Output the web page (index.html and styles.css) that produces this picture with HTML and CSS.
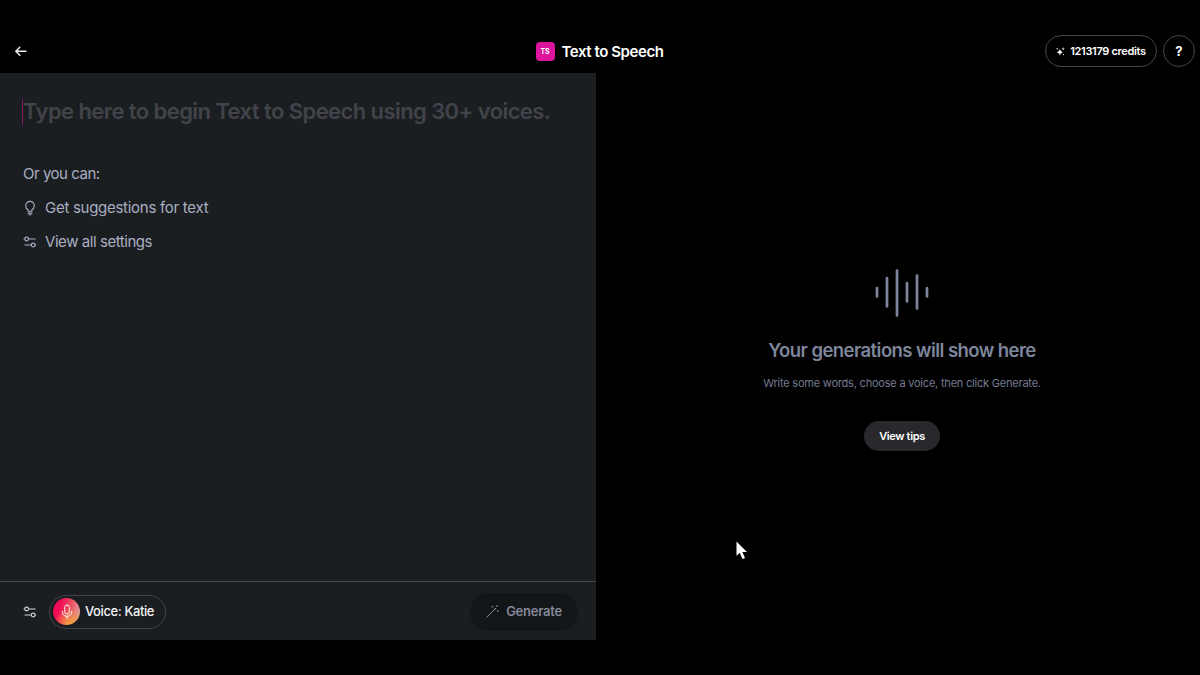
FILE: index.html
```html
<!DOCTYPE html>
<html lang="en">
<head>
<meta charset="utf-8">
<title>Text to Speech</title>
<link rel="stylesheet" href="styles.css">
</head>
<body>
<div class="app">
  <header class="topbar">
    <svg class="back" width="12" height="11" viewBox="0 0 12 11"><path d="M10.9 5.2H1.1M4.8 1.2L.8 5.2L4.8 9.2"/></svg>
    <div class="brand"><span class="logo">TS</span><h1 class="title">Text to Speech</h1></div>
    <div class="actions">
      <button class="credits">
        <svg class="sparkles" width="9" height="9" viewBox="0 0 9 9"><path d="M3.9 2.1Q4.2 4.7 6.9 5.2Q4.2 5.7 3.9 8.6Q3.5 5.7.7 5.2Q3.5 4.7 3.9 2.1ZM7.2 0L7.6 1.4L9 1.8L7.6 2.2L7.2 3.6L6.8 2.2L5.5 1.8L6.8 1.4Z"/><circle cx="1.2" cy="1.8" r=".7"/><circle cx="7.4" cy="7.6" r=".6"/></svg>
        <span class="credits-text">1213179 credits</span>
      </button>
      <button class="help">?</button>
    </div>
  </header>
  <main class="workspace">
    <section class="editor">
      <div class="editor-body">
        <div class="prompt"><span class="prompt-text">Type here to begin Text to Speech using 30+ voices.</span></div>
        <p class="or"><span class="or-text">Or you can:</span></p>
        <a class="option">
          <svg class="line-icon" width="14" height="16" viewBox="0 0 14 16"><path d="M5.1 11.2V9.8Q2.7 8.6 2.7 5.7A4.3 4.3 0 0 1 11.3 5.7Q11.3 8.6 8.9 9.8V11.2ZM5 13.1H9M5.9 14.7H8.1"/></svg>
          <span class="suggest-text">Get suggestions for text</span>
        </a>
        <a class="option">
          <svg class="line-icon" width="14" height="16" viewBox="0 0 14 16"><circle cx="3.6" cy="5" r="1.9"/><circle cx="10.2" cy="11" r="1.9"/><path d="M1 5H1.7M5.5 5H12.2M2 11H8.3M12.1 11H12.8"/></svg>
          <span class="settings-text">View all settings</span>
        </a>
      </div>
      <footer class="toolbar">
        <svg class="line-icon bright" width="14" height="16" viewBox="0 0 14 16"><circle cx="3.6" cy="5" r="1.9"/><circle cx="10.2" cy="11" r="1.9"/><path d="M1 5H1.7M5.5 5H12.2M2 11H8.3M12.1 11H12.8"/></svg>
        <button class="voice">
          <span class="avatar"><svg width="12" height="16" viewBox="0 0 12 16"><rect x="3.7" y="1" width="4.6" height="9" rx="2.3"/><path d="M1.2 7.4Q1.5 12.3 6 12.3Q10.5 12.3 10.8 7.4M6 12.3V14.6"/></svg></span>
          <span class="voice-text">Voice: Katie</span>
        </button>
        <button class="generate">
          <svg class="wand" width="13" height="13" viewBox="0 0 13 13"><path d="M.8 12.2L9.2 3.8"/><path class="dots" d="M6.2 1.7h.3M10.9 1h.3M11.6 5.9h.3M9.2 3.8h.3"/></svg>
          <span class="generate-text">Generate</span>
        </button>
      </footer>
    </section>
    <section class="results">
      <svg class="wave" width="54" height="48" viewBox="0 0 54 48"><path d="M2 19V27.5M12 9V37.5M22 1.5V46.5M32 14V32.5M42 6.5V39.5M52 19V27.5"/></svg>
      <h2 class="empty-title">Your generations will show here</h2>
      <p class="empty-copy">Write some words, choose a voice, then click Generate.</p>
      <button class="tips">View tips</button>
    </section>
  </main>
  <svg class="pointer" width="12" height="19" viewBox="0 0 12 19"><path d="M.5 .5V14.8L3.8 11.7L6.5 18L9 16.9L6.4 10.9H11Z"/></svg>
</div>
</body>
</html>
```
FILE: styles.css
```css
* { box-sizing: border-box; }
body { margin: 0; background: #000; font-family: Inter, sans-serif; overflow: hidden; }
h1, h2, p { margin: 0; }
button { font-family: inherit; padding: 0; border: 0; white-space: nowrap; }
svg { display: block; flex: none; fill: none; stroke: currentColor; stroke-linecap: round; stroke-linejoin: round; }
.app { position: relative; width: 1200px; height: 675px; padding-top: 29px; color: #fff; white-space: nowrap; }

.topbar { display: grid; grid-template-columns: 1fr auto 1fr; align-items: center; height: 44px; padding: 0 5px 0 15px; }
.back { stroke-width: 1.5; color: #eee; }
.brand { display: flex; align-items: center; gap: 7px; padding-right: 11px; }
.logo { display: grid; place-items: center; width: 19px; height: 19px; border-radius: 4px; background: #dc149c; font-size: 7px; font-weight: 700; letter-spacing: -.2px; }
.title { padding-top: 1px; font-size: 15px; font-weight: 600; line-height: 20px; letter-spacing: -.43px; }
.actions { display: flex; justify-content: flex-end; gap: 6px; }
.credits { display: flex; align-items: center; justify-content: center; gap: 5px; width: 112px; height: 32px; border: 1px solid #434347; border-radius: 16px; background: #000; color: #fff; font-size: 11px; font-weight: 600; letter-spacing: -.33px; }
.sparkles { fill: currentColor; stroke: none; }
.help { width: 32px; height: 32px; border: 1px solid #434347; border-radius: 50%; background: #000; color: #fff; font-size: 13px; font-weight: 700; }

.workspace { display: grid; grid-template-columns: 596px 1fr; height: 567px; }
.editor { display: flex; flex-direction: column; background: #1b1e21; }
.editor-body { flex: 1; padding: 26px 22px 0; }
.prompt { height: 26px; border-left: 1px solid #8b1565; color: #42434a; font-size: 22px; font-weight: 600; line-height: 25px; letter-spacing: -.58px; }
.or { margin-top: 37px; padding-left: 1px; color: #a9afc1; font-size: 15px; line-height: 24px; letter-spacing: -.47px; }
.option { display: flex; align-items: center; gap: 8px; height: 24px; margin-top: 10px; padding-left: 1px; color: #a9afc1; font-size: 15px; line-height: 24px; }
.suggest-text { letter-spacing: -.28px; }
.settings-text { letter-spacing: -.44px; }
.line-icon { stroke-width: 1.1; }
.bright { color: #d0d2d8; }
.toolbar { display: flex; align-items: center; height: 59px; padding: 1px 18px 0 23px; border-top: 1px solid #45474c; }
.voice { display: flex; align-items: center; gap: 5px; width: 117px; height: 34px; margin-left: 12px; padding-left: 3px; border: 1px solid #414347; border-radius: 17px; background: transparent; color: #f3f3f5; font-size: 13px; font-weight: 500; letter-spacing: -.4px; }
.avatar { display: grid; place-items: center; width: 27px; height: 27px; border-radius: 50%; background: radial-gradient(circle at 65% 100%, #f6a43a 0, rgba(246,130,60,0) 55%), linear-gradient(100deg, #ef0a55 25%, #f04c60 60%, #d9a5a2 95%); }
.voice-text, .generate-text { padding-bottom: 1px; }
.generate { display: flex; align-items: center; justify-content: center; gap: 7px; width: 108px; height: 38px; margin-left: auto; border-radius: 19px; background: #131619; color: #858797; font-size: 13px; font-weight: 600; letter-spacing: -.25px; }
.wand { stroke-width: 1; }
.dots { stroke-width: 1.5; }

.results { display: flex; flex-direction: column; align-items: center; padding: 196px 0 0 8px; color: #7e869b; }
.wave { stroke-width: 2.7; }
.empty-title { margin-top: 20px; font-size: 18.5px; font-weight: 600; line-height: 26px; letter-spacing: -.56px; }
.empty-copy { margin-top: 12px; padding-bottom: 1px; font-size: 11px; line-height: 16px; letter-spacing: -.21px; color: #747b90; }
.tips { width: 76px; height: 30px; margin-top: 29px; border-radius: 15px; background: #29292d; color: #fff; font-size: 11px; font-weight: 600; letter-spacing: -.35px; }
.pointer { position: absolute; left: 736px; top: 541px; fill: #fff; stroke: none; }
```
